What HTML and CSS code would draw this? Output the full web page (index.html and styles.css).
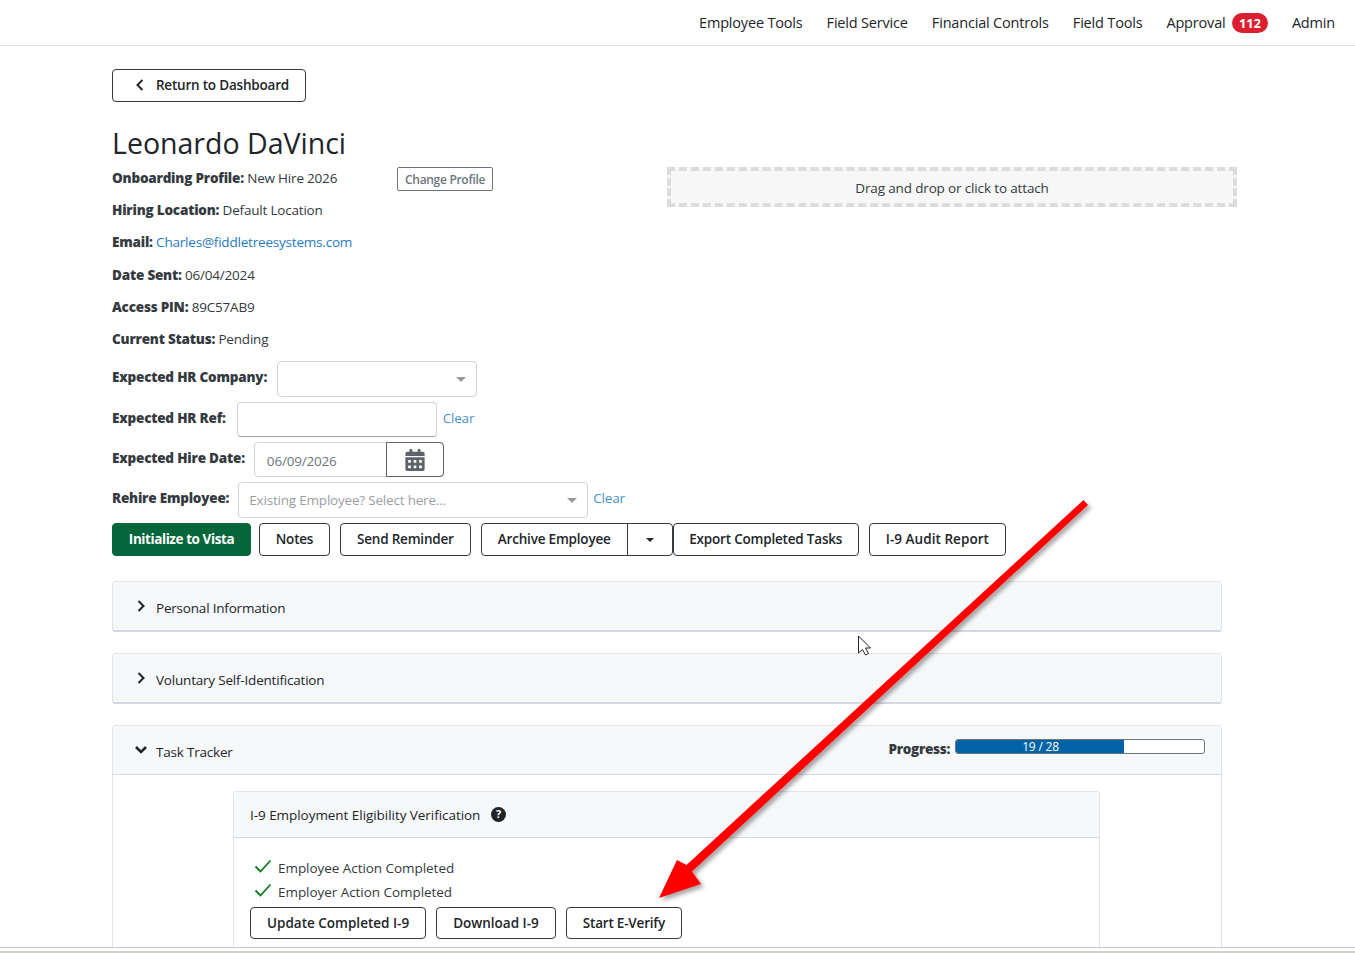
FILE: index.html
```html
<!DOCTYPE html>
<html>
<head>
  <title>Leonardo DaVinci</title>
  <meta name="viewport" content="width=device-width, initial-scale=1.0">
  <link rel="stylesheet" href="styles.css">
</head>
<body>
  <nav class="topnav">
    <a href="#">Employee Tools</a>
    <a href="#">Field Service</a>
    <a href="#">Financial Controls</a>
    <a href="#">Field Tools</a>
    <a href="#">Approval <span class="badge">112</span></a>
    <a href="#">Admin</a>
  </nav>

  <main class="content">
    <button class="btn btn-back">
      <svg class="icon-back" viewBox="0 0 10 14" width="10" height="14"><path d="M7.5 2 L2.5 7 L7.5 12" fill="none" stroke="#212529" stroke-width="2"/></svg>
      Return to Dashboard
    </button>

    <h1>Leonardo DaVinci</h1>

    <div class="top-grid">
      <div class="info">
        <div class="info-row info-profile">
          <div><b>Onboarding Profile:</b> New Hire 2026</div>
          <button class="btn-small">Change Profile</button>
        </div>
        <div class="info-row"><b>Hiring Location:</b> Default Location</div>
        <div class="info-row"><b>Email:</b> <a href="#">Charles@fiddletreesystems.com</a></div>
        <div class="info-row"><b>Date Sent:</b> 06/04/2024</div>
        <div class="info-row"><b>Access PIN:</b> 89C57AB9</div>
        <div class="info-row"><b>Current Status:</b> Pending</div>
      </div>
      <div class="dropzone">Drag and drop or click to attach</div>
    </div>

    <div class="form-row row-company">
      <label>Expected HR Company:</label>
      <div class="select select-company"><span class="caret"></span></div>
    </div>
    <div class="form-row row-ref">
      <label>Expected HR Ref:</label>
      <input class="text-input" type="text">
      <a class="clear" href="#">Clear</a>
    </div>
    <div class="form-row row-date">
      <label>Expected Hire Date:</label>
      <div class="date-group">
        <span class="date-value">06/09/2026</span>
        <span class="date-btn">
          <svg viewBox="0 0 448 512" width="20" height="22"><path fill="#5f6368" d="M0 464c0 26.5 21.500 48 48 48h352c26.500 0 48-21.500 48-48V192H0v272zm320-196c0-6.600 5.400-12 12-12h40c6.600 0 12 5.400 12 12v40c0 6.600-5.400 12-12 12h-40c-6.600 0-12-5.400-12-12v-40zm0 128c0-6.600 5.400-12 12-12h40c6.600 0 12 5.400 12 12v40c0 6.600-5.400 12-12 12h-40c-6.600 0-12-5.400-12-12v-40zM192 268c0-6.600 5.400-12 12-12h40c6.600 0 12 5.400 12 12v40c0 6.600-5.400 12-12 12h-40c-6.600 0-12-5.400-12-12v-40zm0 128c0-6.600 5.400-12 12-12h40c6.600 0 12 5.400 12 12v40c0 6.600-5.400 12-12 12h-40c-6.600 0-12-5.400-12-12v-40zM64 268c0-6.600 5.400-12 12-12h40c6.600 0 12 5.400 12 12v40c0 6.600-5.400 12-12 12H76c-6.600 0-12-5.400-12-12v-40zm0 128c0-6.600 5.400-12 12-12h40c6.600 0 12 5.400 12 12v40c0 6.600-5.400 12-12 12H76c-6.600 0-12-5.400-12-12v-40zM400 64h-48V16c0-8.800-7.200-16-16-16h-32c-8.800 0-16 7.200-16 16v48H160V16c0-8.800-7.200-16-16-16h-32c-8.800 0-16 7.200-16 16v48H48C21.500 64 0 85.500 0 112v48h448v-48c0-26.500-21.500-48-48-48z"/></svg>
        </span>
      </div>
    </div>
    <div class="form-row row-rehire">
      <label>Rehire Employee:</label>
      <div class="select select-rehire"><span class="placeholder">Existing Employee? Select here...</span><span class="caret"></span></div>
      <a class="clear clear-rehire" href="#">Clear</a>
    </div>

    <div class="actions">
      <button class="btn btn-green">Initialize to Vista</button>
      <button class="btn btn-notes">Notes</button>
      <button class="btn">Send Reminder</button>
      <div class="split">
        <button class="btn split-main">Archive Employee</button>
        <button class="btn split-toggle"><span class="caret caret-dark"></span></button>
      </div>
      <button class="btn btn-export">Export Completed Tasks</button>
      <button class="btn btn-loose">I-9 Audit Report</button>
    </div>

    <section class="panel">
      <div class="panel-head">
        <svg class="chev" viewBox="0 0 10 14" width="10" height="14"><path d="M2.500 2 L7.500 7 L2.500 12" fill="none" stroke="#212529" stroke-width="2"/></svg>
        <span>Personal Information</span>
      </div>
    </section>
    <section class="panel">
      <div class="panel-head">
        <svg class="chev" viewBox="0 0 10 14" width="10" height="14"><path d="M2.500 2 L7.500 7 L2.500 12" fill="none" stroke="#212529" stroke-width="2"/></svg>
        <span>Voluntary Self-Identification</span>
      </div>
    </section>
    <section class="panel panel-open">
      <div class="panel-head">
        <svg class="chev chev-down" viewBox="0 0 14 10" width="14" height="10"><path d="M2 2 L7 7 L12 2" fill="none" stroke="#212529" stroke-width="2.600"/></svg>
        <span>Task Tracker</span>
        <div class="progress-wrap">
          <b>Progress:</b>
          <div class="progress"><div class="progress-bar" style="width: 67.800%"></div><span class="progress-text">19 / 28</span></div>
        </div>
      </div>
      <div class="panel-body">
        <div class="task-card">
          <div class="task-head">
            I-9 Employment Eligibility Verification
            <svg class="help" viewBox="0 0 16 16" width="15" height="15"><circle cx="8" cy="8" r="8" fill="#212529"/><text x="8" y="12" text-anchor="middle" font-size="11.500" font-weight="700" fill="#fff" font-family="Noto Sans, sans-serif">?</text></svg>
          </div>
          <div class="task-body">
            <div class="check-row"><svg viewBox="0 0 18 14" width="18" height="14"><path d="M1.500 7.500 L6.500 12.500 L16.500 1.500" fill="none" stroke="#0b7a1d" stroke-width="1.800"/></svg>Employee Action Completed</div>
            <div class="check-row"><svg viewBox="0 0 18 14" width="18" height="14"><path d="M1.500 7.500 L6.500 12.500 L16.500 1.500" fill="none" stroke="#0b7a1d" stroke-width="1.800"/></svg>Employer Action Completed</div>
            <div class="task-actions">
              <button class="btn btn-loose">Update Completed I-9</button>
              <button class="btn btn-loose">Download I-9</button>
              <button class="btn">Start E-Verify</button>
            </div>
          </div>
        </div>
      </div>
    </section>
  </main>

  <!-- annotation drawn over the screenshot -->
  <svg class="annotation" width="1355" height="953" viewBox="0 0 1355 953">
    <defs>
      <filter id="arrow-shadow" x="-10%" y="-10%" width="120%" height="120%">
        <feDropShadow dx="3" dy="3" stdDeviation="2" flood-color="#000" flood-opacity="0.35"/>
      </filter>
    </defs>
    <path filter="url(#arrow-shadow)" fill="#fe0000" d="M1083.500 500 L1088 505 L692 871.500 L701 884 L659 898 L677 860 L686.500 865 Z"/>
    <path fill="#fff" stroke="#222" stroke-width="1" d="M858.500 636 V653 L862.500 649.500 L865.500 655 L868.500 653.500 L865.500 648 L870.500 648 Z"/>
  </svg>

  <div class="window-edge"></div>
</body>
</html>
```

FILE: styles.css
```css
html, body {
  height: 953px;
  overflow: hidden;
}

body {
  margin: 0;
  position: relative;
  background: #fff;
  color: #212529;
  font-family: "Open Sans", "Noto Sans", sans-serif;
  font-size: 13.500px;
  letter-spacing: -0.2px;
}

a {
  color: #1f7ac4;
  text-decoration: none;
}

b {
  color: #343a40;
  font-weight: 800;
}

.topnav {
  display: flex;
  justify-content: flex-end;
  align-items: center;
  gap: 24px;
  height: 45px;
  padding-right: 20px;
  border-bottom: 1px solid #dedede;
  font-size: 14.500px;
  letter-spacing: -0.18px;
}

.topnav a {
  color: #212529;
}

.badge {
  display: inline-block;
  margin-left: 3px;
  padding: 1px 7px;
  border-radius: 10px;
  background: #dc1f2e;
  color: #fff;
  font-size: 13px;
  font-weight: 700;
  line-height: 18px;
}

.content {
  width: 1110px;
  padding: 23px 0 0 112px;
}

.btn {
  height: 33px;
  padding: 0 16px;
  background: #fff;
  border: 1px solid #343a40;
  border-radius: 4px;
  color: #212529;
  font: inherit;
  font-weight: 600;
  letter-spacing: -0.2px;
  white-space: nowrap;
}

.btn-loose {
  letter-spacing: 0.05px;
}

.btn-back {
  display: flex;
  align-items: center;
  gap: 11px;
  width: 194px;
  padding-left: 22px;
  padding-bottom: 2px;
}

h1 {
  margin: 23px 0 1px;
  font-size: 28.500px;
  font-weight: 400;
  line-height: 36px;
  letter-spacing: 0;
}

.top-grid {
  display: grid;
  grid-template-columns: 555px 570px;
}

.info {
  padding-top: 6px;
}

.info-row {
  height: 32.200px;
  line-height: 20px;
  color: #343a40;
}

.info-profile {
  display: flex;
}

.info-profile > div {
  width: 285px;
}

.btn-small {
  height: 24px;
  margin-top: -1px;
  padding: 1px 7px 0;
  background: #fff;
  border: 1px solid #6c757d;
  border-radius: 2px;
  color: #6c757d;
  font: inherit;
  font-size: 12px;
  font-weight: 600;
  letter-spacing: -0.3px;
}

.dropzone {
  display: flex;
  align-items: center;
  justify-content: center;
  box-sizing: border-box;
  height: 40px;
  margin-top: 5px;
  padding-top: 1px;
  background: #f7f7f7;
  border: 4px dashed #dcdcdc;
  color: #343a40;
  letter-spacing: -0.15px;
}

.form-row {
  display: flex;
  align-items: center;
  color: #343a40;
}

.form-row label {
  font-weight: 800;
}

.row-company { height: 36px; gap: 10px; }
.row-ref { margin-top: 5px; height: 35px; gap: 11px; }
.row-date { margin-top: 5px; height: 35px; gap: 9px; }
.row-rehire { margin-top: 5px; height: 36px; gap: 9px; }

.row-company label,
.row-ref label,
.row-date label,
.row-rehire label {
  position: relative;
  top: -2px;
}

.select {
  display: flex;
  align-items: center;
  justify-content: space-between;
  box-sizing: border-box;
  height: 36px;
  padding: 0 10px;
  border: 1px solid #ced4da;
  border-radius: 4px;
}

.select-company { width: 200px; }
.select-rehire { width: 350px; }

.placeholder {
  color: #9a9ea3;
}

.caret {
  display: inline-block;
  width: 0;
  height: 0;
  margin-left: auto;
  border-top: 5px solid #999;
  border-left: 5px solid transparent;
  border-right: 5px solid transparent;
}

.caret-dark {
  display: block;
  margin: -2px auto 0;
  border-top-color: #212529;
  border-left-width: 4px;
  border-right-width: 4px;
  border-top-width: 4px;
}

.text-input {
  box-sizing: border-box;
  width: 200px;
  height: 35px;
  border: 1px solid #ced4da;
  border-bottom-color: #9aa0a6;
  border-radius: 4px;
}

.clear {
  margin: -4px 0 0 -5px;
  color: #4a90c8;
}

.clear-rehire {
  margin: -4px 0 0 -4px;
}

.date-group {
  display: flex;
  box-sizing: border-box;
  width: 190px;
  height: 35px;
  border: 1px solid #ced4da;
  border-radius: 4px;
}

.date-value {
  box-sizing: border-box;
  width: 132px;
  padding: 9px 0 0 12px;
  color: #6c757d;
}

.date-btn {
  display: flex;
  flex: 1;
  align-items: center;
  justify-content: center;
  margin: -1px;
  border: 1px solid #5f6368;
  border-radius: 0 4px 4px 0;
}

.actions {
  display: flex;
  gap: 10px;
  margin-top: 5px;
  align-items: center;
}

.actions .btn {
  padding-bottom: 2px;
}

.btn-green {
  width: 139px;
  margin-right: -2px;
  padding: 0;
  background: #04663a;
  border-color: #04663a;
  color: #fff;
  font-weight: 700;
  letter-spacing: -0.42px;
}

.actions .btn-notes {
  width: 71px;
  padding: 0 0 2px;
}

.actions .btn-export {
  width: 186px;
  padding: 0 0 2px;
}

.split {
  display: flex;
  margin-right: -10px;
}

.actions .split-main {
  width: 147px;
  padding: 0 0 2px;
  border-radius: 4px 0 0 4px;
}

.actions .split-toggle {
  width: 46px;
  margin-left: -1px;
  padding: 2px 0 0;
  border-radius: 0 4px 4px 0;
}

.panel {
  margin-top: 21px;
  border: 1px solid #e1e4e8;
  border-bottom: 2px solid #d5d8e0;
  border-radius: 3px;
}

.actions + .panel {
  margin-top: 25px;
}

.panel-head {
  display: flex;
  align-items: center;
  box-sizing: border-box;
  height: 48px;
  padding: 4px 0 0 23px;
  background: #f7f8fa;
}

.chev {
  flex: none;
  margin: -4px 10px 0 0;
}

.chev-down {
  margin: -4px 8px 0 -2px;
}

.panel-open {
  box-sizing: border-box;
  height: 228px;
  border-bottom: 0;
}

.panel-open .panel-head {
  border-bottom: 1px solid #d5d8e0;
  height: 49px;
}

.progress-wrap {
  display: flex;
  align-items: center;
  gap: 5px;
  margin: -6px 16px 0 auto;
}

.progress-wrap b {
  letter-spacing: -0.3px;
}

.progress {
  position: relative;
  box-sizing: border-box;
  width: 250px;
  height: 15px;
  margin-top: -6px;
  background: #fff;
  border: 1px solid #6c757d;
  border-radius: 3px;
  overflow: hidden;
}

.progress-bar {
  height: 100%;
  background: #0063a6;
}

.progress-text {
  position: absolute;
  left: 0;
  top: -1px;
  width: 169px;
  color: #fff;
  font-size: 12px;
  line-height: 16px;
  text-align: center;
}

.panel-body {
  padding: 16px 121px 0 120px;
}

.task-card {
  box-sizing: border-box;
  height: 162px;
  border: 1px solid #e1e4e8;
  border-radius: 3px;
}

.task-head {
  display: flex;
  align-items: center;
  gap: 11px;
  box-sizing: border-box;
  height: 46px;
  padding-left: 16px;
  background: #f7f8fa;
  border-bottom: 1px solid #d5d8e0;
  letter-spacing: -0.05px;
}

.task-body {
  padding: 18px 16px 0;
}

.check-row {
  display: flex;
  align-items: center;
  gap: 6px;
  height: 24px;
  padding-left: 4px;
  color: #343a40;
  letter-spacing: -0.05px;
}

.check-row svg {
  margin-top: -4px;
}

.task-actions {
  display: flex;
  gap: 10px;
  margin-top: 3px;
}

.task-actions .btn {
  height: 32px;
}

.task-actions .btn-loose {
  letter-spacing: 0;
}

.annotation {
  position: absolute;
  left: 0;
  top: 0;
  pointer-events: none;
}

.window-edge {
  position: absolute;
  left: 0;
  right: 0;
  bottom: 0;
  height: 3px;
  background: #fff;
  border-top: 1px solid #c8c8c8;
  border-bottom: 2px solid #d3d0c6;
}
```
